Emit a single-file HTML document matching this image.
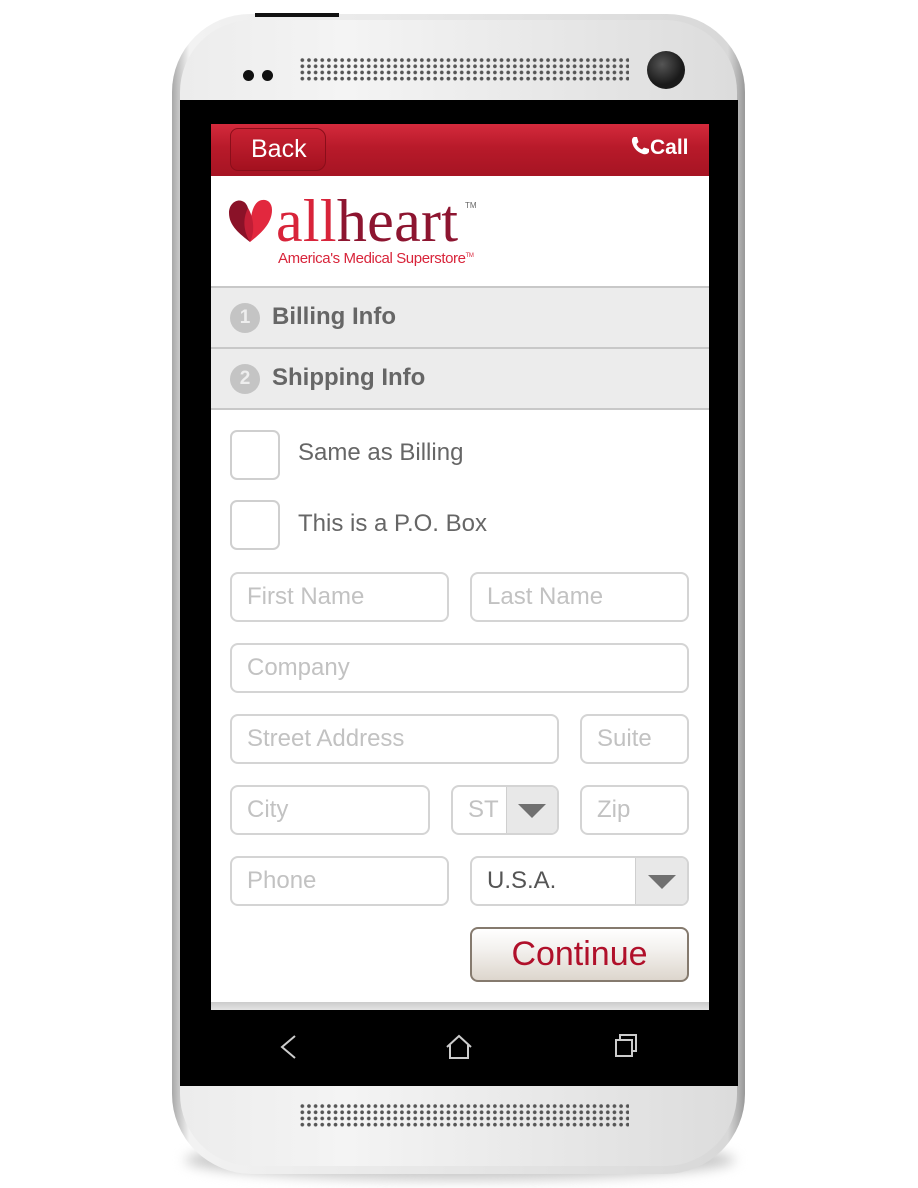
<!DOCTYPE html>
<html><head><meta charset="utf-8"><style>
*{margin:0;padding:0;box-sizing:border-box}
body{width:918px;height:1188px;background:#fff;position:relative;overflow:hidden;font-family:"Liberation Sans",Arial,sans-serif}
.a{position:absolute}
.shadow{left:185px;top:1140px;width:550px;height:40px;border-radius:50%;background:#c8c8c8;filter:blur(6px)}
.phone{left:172px;top:14px;width:573px;height:1160px;border-radius:78px 78px 80px 80px;background:linear-gradient(90deg,#a8a8a8,#f2f2f2 3%,#e6e6e6 50%,#d8d8d8 97%,#999);}
.face{left:180px;top:20px;width:557px;height:1146px;border-radius:72px;background:linear-gradient(90deg,#ececec,#f4f4f4 30%,#dcdcdc 100%)}
.screen{left:180px;top:100px;width:558px;height:986px;background:#000}
.app{left:211px;top:124px;width:498px;height:886px;background:#fff}
.hdr{left:211px;top:124px;width:498px;height:52px;background:linear-gradient(#d42a3c,#b81a2a 45%,#a61423)}
.back{left:230px;top:128px;width:96px;height:43px;border:1px solid #8a0e1a;border-radius:8px 10px 10px 8px;background:linear-gradient(#c92233,#a3111f);color:#fff;font-size:25px;line-height:41px;padding-left:20px}
.call{left:630px;top:136px;color:#fff;font-weight:bold;font-size:21px}
.row{left:211px;width:498px;height:61px;background:#ececec;border-top:2px solid #c8c8c8;font-weight:bold;color:#666;font-size:24px;line-height:58px;padding-left:61px}
.num{position:absolute;left:19px;top:15px;width:30px;height:30px;border-radius:50%;background:#c4c4c4;color:#eee;font-size:19px;line-height:30px;text-align:center}
.cb{width:50px;height:50px;border:2px solid #cfcfcf;border-radius:7px}
.lbl{left:298px;font-size:24px;color:#666}
.in{height:50px;border:2px solid #d4d4d4;border-radius:8px;font-size:24px;color:#c2c2c2;line-height:46px;padding-left:15px;overflow:hidden}
.dd{position:absolute;top:0;right:0;height:100%;background:#e8e8e8;border-left:1px solid #cfcfcf}
.dd:after{content:"";position:absolute;left:50%;top:50%;margin:-6px 0 0 -14px;border-left:14px solid transparent;border-right:14px solid transparent;border-top:14px solid #707070}
.btn{left:470px;top:927px;width:219px;height:55px;border:2px solid #857a6e;border-radius:8px;background:linear-gradient(#fff,#f3f1ee 40%,#ddd6cd);color:#b0102a;font-size:34px;text-align:center;line-height:51px}
.spk{width:330px;height:24px;background-image:radial-gradient(circle,#555 1.6px,transparent 2.1px);background-size:6.65px 6.2px}
</style></head><body>
<div class="a shadow"></div>
<div class="a phone"></div>
<div class="a face"></div>
<div class="a" style="left:255px;top:13px;width:84px;height:4px;background:#111"></div>
<div class="a" style="left:243px;top:70px;width:11px;height:11px;border-radius:50%;background:#111"></div>
<div class="a" style="left:262px;top:70px;width:11px;height:11px;border-radius:50%;background:#111"></div>
<div class="a spk" style="left:299px;top:57px"></div>
<div class="a" style="left:647px;top:51px;width:38px;height:38px;border-radius:50%;background:radial-gradient(circle at 40% 35%,#555,#1a1a1a 60%)"></div>
<div class="a screen"></div>
<div class="a app"></div>
<div class="a hdr"></div>
<div class="a back">Back</div>
<div class="a call"><svg width="20" height="20" viewBox="0 0 20 20" style="vertical-align:-2px"><path d="M4 1 L7 1 L8.5 6 L6.5 8 Q8 12 12 13.5 L14 11.5 L19 13 L19 16 Q17 19 13 18 Q4 15 2 6 Q1.5 2 4 1Z" fill="#fff"/></svg>Call</div>
<svg class="a" style="left:228px;top:198px" width="46" height="46" viewBox="0 0 46 46"><path d="M22 44 C12 36 1 28 1 15 C1 6 8 1 14 3 C20 5 23 12 22 44Z" fill="#8a1228"/><path d="M22 44 C32 36 44 26 44 12 C44 3 37 0 31 3 C26 6 21 14 22 44Z" fill="#e2283e"/><path d="M22 44 C16 34 14 22 20 10 C26 20 27 34 22 44Z" fill="#c21e36"/></svg>
<div class="a" style="left:276px;top:191px;font-family:'Liberation Serif',serif;font-size:60px;letter-spacing:0.3px;line-height:60px;white-space:nowrap"><span style="color:#d8243a">all</span><span style="color:#8d1530">heart</span></div>
<div class="a" style="left:465px;top:201px;font-size:8px;color:#666">TM</div>
<div class="a" style="left:278px;top:250px;font-size:15px;color:#d8243a;letter-spacing:-0.4px;white-space:nowrap">America's Medical Superstore<sup style="font-size:6px">TM</sup></div>
<div class="a row" style="top:286px"><div class="num">1</div>Billing Info</div>
<div class="a row" style="top:347px;border-bottom:2px solid #c8c8c8;height:63px"><div class="num">2</div>Shipping Info</div>
<div class="a cb" style="left:230px;top:430px"></div><div class="a lbl" style="top:439px">Same as Billing</div>
<div class="a cb" style="left:230px;top:500px"></div><div class="a lbl" style="top:510px">This is a P.O. Box</div>
<div class="a in" style="left:230px;top:572px;width:219px">First Name</div>
<div class="a in" style="left:470px;top:572px;width:219px">Last Name</div>
<div class="a in" style="left:230px;top:643px;width:459px">Company</div>
<div class="a in" style="left:230px;top:714px;width:329px">Street Address</div>
<div class="a in" style="left:580px;top:714px;width:109px">Suite</div>
<div class="a in" style="left:230px;top:785px;width:200px">City</div>
<div class="a in" style="left:451px;top:785px;width:108px">ST<div class="dd" style="width:51px"></div></div>
<div class="a in" style="left:580px;top:785px;width:109px">Zip</div>
<div class="a in" style="left:230px;top:856px;width:219px">Phone</div>
<div class="a in" style="left:470px;top:856px;width:219px;color:#555">U.S.A.<div class="dd" style="width:52px"></div></div>
<div class="a btn">Continue</div>
<div class="a" style="left:211px;top:1002px;width:498px;height:8px;background:linear-gradient(#ccc,#e4e4e4)"></div>
<svg class="a" style="left:270px;top:1030px" width="380" height="34" viewBox="0 0 380 34"><path d="M25 6 L12 17 L25 28" stroke="#ccc" stroke-width="2" fill="none"/><path d="M177 17 L189 6 L201 17 M180 15 V28 H198 V15" stroke="#ccc" stroke-width="2" fill="none"/><path d="M346 10 H362 V26 H346Z M350 10 V5 H366 V21 H362" stroke="#ccc" stroke-width="2" fill="none"/></svg>
<div class="a spk" style="left:299px;top:1103px"></div>
</body></html>
